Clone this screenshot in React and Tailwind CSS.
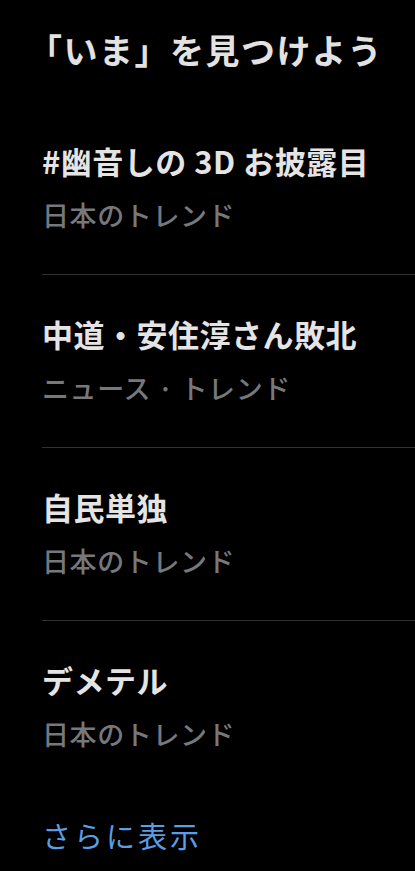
import React from "react";

const trends = [
  { title: "#幽音しの 3D お披露目", sub: "日本のトレンド" },
  { title: "中道・安住淳さん敗北", sub: "ニュース · トレンド" },
  { title: "自民単独", sub: "日本のトレンド" },
  { title: "デメテル", sub: "日本のトレンド" },
];

export default function App() {
  return (
    <div
      className="min-h-[871px] w-[415px] bg-black pl-[42px] overflow-hidden"
      style={{ fontFamily: '"Noto Sans CJK JP", "Noto Sans", sans-serif' }}
    >
      <h1 className="pt-[28px] h-[72px] leading-[44px] text-[34px] font-bold tracking-[1.5px] text-[#e2e2e2] -ml-[14px] whitespace-nowrap">
        「いま」を見つけよう
      </h1>
      <div className="mt-[30px]">
        {trends.map((t, i) => (
          <div
            key={i}
            className={
              i < trends.length - 1
                ? "pt-[39px] pb-[45px] border-b border-[#2f3336]"
                : "pt-[39px]"
            }
          >
            <div className="h-[40px] leading-[40px] text-[31px] font-bold tracking-[0.5px] text-[#e4e4e4] whitespace-nowrap">
              {t.title}
            </div>
            <div className="mt-[20px] h-[28px] leading-[28px] text-[27px] font-medium tracking-[0.6px] text-[#76787c] whitespace-nowrap">
              {t.sub}
            </div>
          </div>
        ))}
      </div>
      <div className="mt-[69px] h-[36px] leading-[36px] text-[29px] tracking-[3px] text-[#5b9ee3]">
        さらに表示
      </div>
    </div>
  );
}
